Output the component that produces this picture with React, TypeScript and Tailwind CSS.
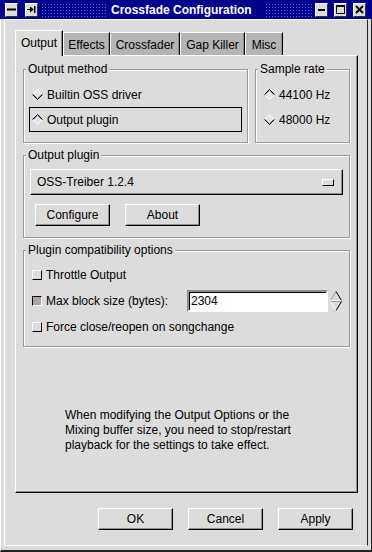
import React from "react";

const raised =
  "border border-t-white border-l-white border-r-black border-b-black shadow-[inset_-1px_-1px_0_#8e8e8e]";
const etched =
  "border border-[#9a9a9a] shadow-[1px_1px_0_#fff,inset_1px_1px_0_#fff]";

function Diamond({ on }: { on?: boolean }) {
  const top = "0.5,5.5 5.5,0.5 10.5,5.5";
  const bottom = "0.5,5.5 5.5,10.5 10.5,5.5";
  return (
    <svg width="11" height="11" viewBox="0 0 11 11" className="shrink-0">
      <polygon points="0.5,5.5 5.5,0.5 10.5,5.5 5.5,10.5" fill="#e4e4e4" />
      {on ? (
        <>
          <polyline points={bottom} fill="none" stroke="#fff" />
          <polyline points={top} fill="none" stroke="#000" />
          <polyline points="1.5,5.5 5.5,1.5 9.5,5.5" fill="none" stroke="#8e8e8e" />
        </>
      ) : (
        <>
          <polyline points={top} fill="none" stroke="#fff" />
          <polyline points={bottom} fill="none" stroke="#000" />
          <polyline points="1.5,5.5 5.5,9.5 9.5,5.5" fill="none" stroke="#8e8e8e" />
        </>
      )}
    </svg>
  );
}

function Radio({ label, on, focus }: { label: string; on?: boolean; focus?: boolean }) {
  return (
    <div
      className={
        "mx-[5px] h-[25px] flex items-center pl-[2px] border " +
        (focus ? "border-black" : "border-transparent")
      }
    >
      <Diamond on={on} />
      <span className="ml-[4px]">{label}</span>
    </div>
  );
}

function Check({ on }: { on?: boolean }) {
  return on ? (
    <div className="w-[10px] h-[10px] shrink-0 bg-[#a6a6a6] border border-t-black border-l-black border-r-white border-b-white" />
  ) : (
    <div className="w-[10px] h-[10px] shrink-0 bg-[#dcdcdc] border border-t-white border-l-white border-r-black border-b-black" />
  );
}

function Btn({ label, className = "" }: { label: string; className?: string }) {
  return (
    <div
      className={
        "w-[75px] h-[22px] flex items-center justify-center bg-[#dcdcdc] " + raised + " " + className
      }
    >
      {label}
    </div>
  );
}

function TitleBtn({ children }: { children: React.ReactNode }) {
  return (
    <div className="w-[13px] h-[14px] shrink-0 bg-[#dcdcdc] border border-t-white border-l-white border-r-[#333] border-b-[#333] flex items-center justify-center">
      {children}
    </div>
  );
}

// dithered dots either side of the title
const dots =
  "h-[14px] bg-[radial-gradient(#5a5ae8_1px,transparent_1px)] bg-[length:3px_3px]";

function TitleBar() {
  return (
    <div className="h-[19px] shrink-0 bg-[#00008a] flex items-center pl-[5px] pr-[6px]">
      <TitleBtn>
        <svg width="9" height="9" viewBox="0 0 9 9">
          <rect x="0" y="3.5" width="9" height="2" fill="#000" />
        </svg>
      </TitleBtn>
      <div className="ml-[7px]">
        <TitleBtn>
          <svg width="9" height="9" viewBox="0 0 9 9">
            <rect x="0" y="4" width="4" height="1" fill="#000" />
            <polygon points="3,1.5 7,4.5 3,7.5" fill="#000" />
            <rect x="7" y="1" width="1.5" height="7" fill="#000" />
          </svg>
        </TitleBtn>
      </div>
      <div className={"ml-[3px] w-[66px] " + dots} />
      <div className="ml-[4px] text-white font-bold text-[12px] leading-[14px] whitespace-nowrap">
        Crossfade Configuration
      </div>
      <div className={"ml-[13px] flex-1 " + dots} />
      <div className="ml-[2px]">
        <TitleBtn>
          <svg width="9" height="9" viewBox="0 0 9 9">
            <rect x="1" y="4" width="7" height="2" fill="#000" />
          </svg>
        </TitleBtn>
      </div>
      <div className="ml-[6px]">
        <TitleBtn>
          <svg width="9" height="9" viewBox="0 0 9 9">
            <rect x="0.5" y="0.5" width="8" height="8" fill="none" stroke="#000" />
            <rect x="0.5" y="0.5" width="8" height="1.5" fill="#000" />
          </svg>
        </TitleBtn>
      </div>
      <div className="ml-[6px]">
        <TitleBtn>
          <svg width="9" height="9" viewBox="0 0 9 9">
            <path d="M1 1 L8 8 M8 1 L1 8" stroke="#000" strokeWidth="2" />
          </svg>
        </TitleBtn>
      </div>
    </div>
  );
}

const tabs = [
  { label: "Output", w: "w-[48px]" },
  { label: "Effects", w: "w-[47px]" },
  { label: "Crossfader", w: "w-[70px]" },
  { label: "Gap Killer", w: "w-[65px]" },
  { label: "Misc", w: "w-[38px]" },
];

function Tabs() {
  return (
    <div className="h-[25px] flex items-end">
      {tabs.map((t, i) =>
        i === 0 ? (
          <div
            key={t.label}
            className={
              t.w +
              " h-[26px] -mb-[1px] relative z-10 bg-[#dcdcdc] border-t border-l border-r border-t-white border-l-white border-r-black shadow-[inset_-1px_0_0_#8e8e8e] flex items-center justify-center pb-[1px]"
            }
          >
            {t.label}
          </div>
        ) : (
          <div
            key={t.label}
            className={
              t.w +
              " h-[23px] bg-[#b4b4b4] border-t border-l border-r border-t-white border-l-white border-r-black shadow-[inset_-1px_0_0_#8e8e8e] flex items-center justify-center pt-[1px]"
            }
          >
            {t.label}
          </div>
        )
      )}
    </div>
  );
}

function Legend({ children }: { children: React.ReactNode }) {
  return <legend className="ml-[2px] px-[2px] leading-[14px] bg-[#dcdcdc]">{children}</legend>;
}

function SpinArrows() {
  return (
    <svg width="14" height="22" viewBox="0 0 14 22" className="ml-[1px] shrink-0">
      {/* up arrow */}
      <polyline points="1.5,10.5 7,1.5" fill="none" stroke="#9a9a9a" />
      <polyline points="7,1.5 12.5,10.5" fill="none" stroke="#000" />
      <polyline points="1.5,10.5 12.5,10.5" fill="none" stroke="#fff" />
      {/* down arrow */}
      <polyline points="1.5,11.5 12.5,11.5" fill="none" stroke="#9a9a9a" />
      <polyline points="1.5,11.5 7,20.5" fill="none" stroke="#fff" />
      <polyline points="7,20.5 12.5,11.5" fill="none" stroke="#000" />
    </svg>
  );
}

function Panel() {
  return (
    <div className="h-[438px] bg-[#dcdcdc] border border-t-white border-l-white border-r-black border-b-black shadow-[inset_-1px_-1px_0_#8e8e8e] px-[7px] pt-[6px]">
      <div className="flex gap-[7px]">
        <fieldset className={"w-[225px] pb-[10px] " + etched}>
          <Legend>Output method</Legend>
          <div className="mt-[6px]">
            <Radio label="Builtin OSS driver" />
            <Radio label="Output plugin" on focus />
          </div>
        </fieldset>
        <fieldset className={"w-[95px] pb-[10px] " + etched}>
          <Legend>Sample rate</Legend>
          <div className="mt-[6px]">
            <Radio label="44100 Hz" on />
            <Radio label="48000 Hz" />
          </div>
        </fieldset>
      </div>

      <fieldset className={"mt-[5px] w-[327px] pb-[11px] " + etched}>
        <Legend>Output plugin</Legend>
        <div
          className={
            "mt-[7px] mx-[6px] h-[26px] flex items-center pl-[6px] pr-[8px] bg-[#dcdcdc] " + raised
          }
        >
          <span className="flex-1">OSS-Treiber 1.2.4</span>
          <div className="w-[12px] h-[7px] border border-t-white border-l-white border-r-black border-b-black" />
        </div>
        <div className="mt-[9px] ml-[11px] flex gap-[15px]">
          <Btn label="Configure" />
          <Btn label="About" />
        </div>
      </fieldset>

      <fieldset className={"mt-[5px] w-[327px] pb-[6px] " + etched}>
        <Legend>Plugin compatibility options</Legend>
        <div className="mt-[5px]">
          <div className="h-[26px] flex items-center pl-[8px]">
            <Check />
            <span className="ml-[4px]">Throttle Output</span>
          </div>
          <div className="h-[26px] flex items-center pl-[8px]">
            <Check on />
            <span className="ml-[4px] w-[141px]">Max block size (bytes):</span>
            <div className="w-[141px] h-[22px] bg-white border-2 border-t-[#8e8e8e] border-l-[#8e8e8e] border-r-white border-b-white shadow-[inset_1px_1px_0_#000] flex items-center pl-[1px]">
              <span className="ml-[1px]">2304</span>
            </div>
            <SpinArrows />
          </div>
          <div className="h-[26px] flex items-center pl-[8px]">
            <Check />
            <span className="ml-[4px]">Force close/reopen on songchange</span>
          </div>
        </div>
      </fieldset>

      <div className="mt-[61px] ml-[42px] leading-[15px]">
        When modifying the Output Options or the
        <br />
        Mixing buffer size, you need to stop/restart
        <br />
        playback for the settings to take effect.
      </div>
    </div>
  );
}

export default function App() {
  return (
    <div className="w-[372px] h-[552px] bg-[#dcdcdc] flex flex-col font-['Liberation_Sans',Arial,sans-serif] text-[12px] text-black leading-[14px] overflow-hidden">
      <TitleBar />
      <div className="flex-1 flex flex-col border-l border-l-white border-r border-r-[#222] border-b-2 border-b-[#222] px-[3px] pb-[4px]">
        <div className="flex-1 border border-t-white border-l-white border-r-[#222] border-b-white pl-[10px] pr-[9px] pt-[10px] pb-[15px]">
          <Tabs />
          <Panel />
          <div className="mt-[15px] flex justify-end gap-[15px] pr-[5px]">
            <Btn label="OK" />
            <Btn label="Cancel" />
            <Btn label="Apply" />
          </div>
        </div>
      </div>
    </div>
  );
}
